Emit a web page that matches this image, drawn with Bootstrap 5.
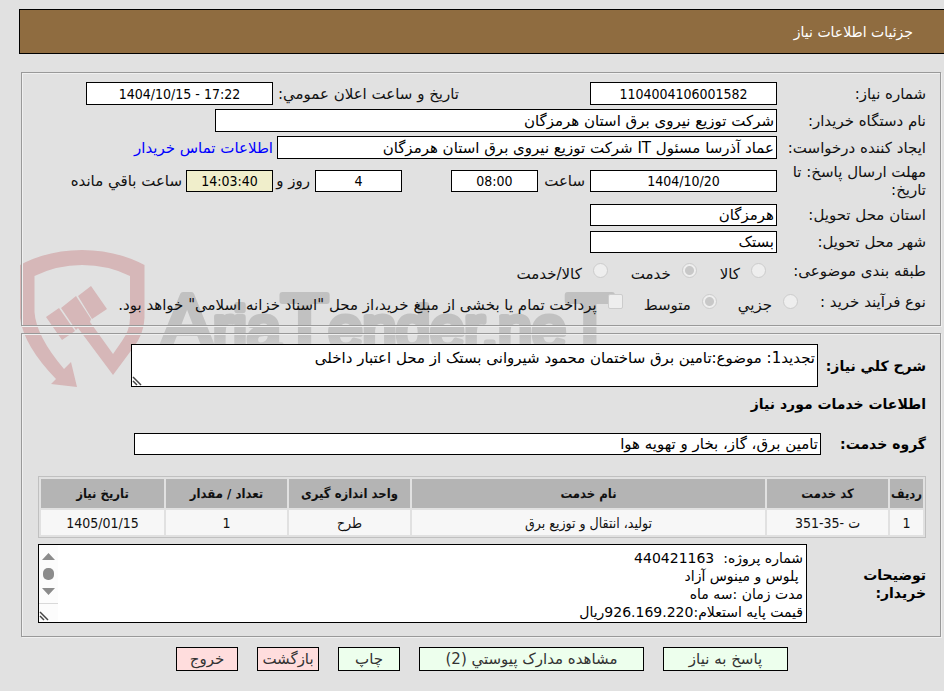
<!DOCTYPE html>
<html lang="fa" dir="rtl">
<head>
<meta charset="utf-8">
<meta name="viewport" content="width=device-width, initial-scale=1">
<title>جزئیات اطلاعات نیاز</title>
<link href="https://cdn.jsdelivr.net/npm/bootstrap@5.3.0/dist/css/bootstrap.min.css" rel="stylesheet">
<style>
body{background:#e1e1e1;color:#111;font-family:"DejaVu Sans",sans-serif;font-size:15px;line-height:18px}
.title-bar{background:#8f6c40;color:#fff;border:1px solid #000;border-right:0;margin:9px 0 18px 19px;padding:13px 31px 12px 0}
.title-bar h1{font-size:14px;line-height:18px;font-weight:400}
.panel{border:1px solid #999;box-shadow:inset 1px 1px #f0f0f0,1px 1px #f0f0f0;margin:0 3px 0 21px;padding:0 14px 0 16px}
.panel-info{padding-top:7px;padding-bottom:8px}
.panel-need{margin-top:7px;padding-top:10px;padding-bottom:13px}
.line{min-height:27px;white-space:nowrap}
.line-tall{min-height:40px}
.line-kind{min-height:31px;gap:23px}
.line-proc{min-height:31px;gap:21px}
.cap{width:149px;flex:none}
.cap-wrap{white-space:normal}
.cap-kind{width:137px;flex:none}
.cap-proc{width:107px;flex:none}
.box{background:#fff;border:1px solid #000;border-radius:0;padding:0 2px;height:23px;color:#000;min-width:0}
.box-low{height:22px}
.box-mid{width:187px}
.box-small{width:87px}
.box-num{text-align:center;font-family:"DejaVu Sans Condensed","DejaVu Sans",sans-serif;font-size:14px}
.box-org{width:562px}
.box-user{width:500px}
.box-left{background:#f0eecb}
.pub-cap{width:186px;margin-right:131px}
.gap-hour{margin-right:49px}
.hour-cap{width:52px;padding-right:5px}
.day-cap{width:42px;padding-right:5px}
.buyer-link{color:#00f;text-decoration:none}
.opt input{appearance:none;width:15px;height:15px;border:1px solid #ccc;background:#eee;border-radius:50%;flex:none}
.opt input[type=checkbox]{border-radius:2px}
.opt input:checked{background:radial-gradient(circle,#c8c8c8 0 4px,#eee 5px)}
.opt label{margin-right:11px;padding-top:7px}
.strong-cap{font-size:14px;font-weight:700;color:#000;flex:none}
.need-cap{width:108px}
.group-cap{width:105px}
.notes-cap{width:119px;padding-left:40px}
.panel-need h2{line-height:18px;margin:8px 0 20px}
.area{background:#fff;border:1px solid #000;border-radius:0;display:block;width:100%;resize:none;overflow:hidden;color:#000}
.need-area{height:43px;padding:4px 2px}
.notes-area{height:79px;padding:4px 3px 0 20px;font-size:14px}
.need-wrap{margin-left:93px}
.group-box{margin-left:96px}
.grip{left:1px;bottom:1px}
.bar{left:1px;top:1px}
.need-table{width:100%;border:1px solid #c0c0c0;border-collapse:separate;border-spacing:2px;font-family:"DejaVu Sans Condensed","DejaVu Sans",sans-serif;font-size:14px;text-align:center;margin:21px 0 6px;table-layout:fixed}
.need-table th{background:#b4b4b4;height:29px;padding:0;font-size:13px}
.need-table td{background:#f7f7f7;height:25px;padding:0}
.col-row{width:33px}
.col-std{width:121px}
.col-date{width:123px}
.actions{gap:19px;margin-top:10px;padding-right:156px}
.act{border:1px solid #000;background:#edffed;color:#333;padding:2px 0;width:62px;white-space:nowrap}
.act-no{background:#fdd}
.act-reply{width:125px}
.act-docs{width:225px}
.watermark{left:18px;top:245px;z-index:-1;direction:ltr}
.watermark text{font-family:"Liberation Sans",sans-serif}
</style>
</head>
<body>
<svg class="watermark position-absolute" width="610" height="145" viewBox="18 245 610 145" aria-hidden="true">
 <defs><linearGradient id="fade" gradientUnits="userSpaceOnUse" x1="0" y1="335" x2="0" y2="352"><stop offset="0" stop-color="#c1c1c1"/><stop offset="1" stop-color="#d2d2d2"/></linearGradient></defs>
 <path fill="#d6b7b8" d="M20 265Q48 250 82 250Q116 250 144.500 265V318Q144 334 133 348L113 375L78 328L76 330L61 308L76 296L91 319L90 322L113 354L122 341Q130 330 130 318V276Q108 265 82 265Q57 265 34.500 276V312Q36 336 64 369L71 362L77 387L51 384L56 379Q24 346 20 318ZM46 317L59 308L75 331L62 340ZM78 296L91 286L107 309L92 319Z"/>
 <text x="161" y="349" font-size="61" fill="url(#fade)" stroke="url(#fade)" stroke-width="6" stroke-linejoin="round"><tspan font-size="78">A</tspan>ria<tspan font-size="78">T</tspan>ender.ne<tspan font-size="78">T</tspan></text>
</svg>
<header class="title-bar"><h1 class="m-0">جزئیات اطلاعات نیاز</h1></header>
<main>
<section class="panel panel-info">
 <div class="line d-flex align-items-center"><label class="cap" for="num">شماره نیاز:</label><input class="box box-mid box-num" id="num" readonly value="1104004106001582"><label class="pub-cap" for="pub">تاریخ و ساعت اعلان عمومي:</label><input class="box box-mid box-num" id="pub" dir="ltr" readonly value="1404/10/15 - 17:22"></div>
 <div class="line d-flex align-items-center"><label class="cap" for="org">نام دستگاه خریدار:</label><input class="box box-org" id="org" readonly value="شرکت توزیع نیروی برق استان هرمزگان"></div>
 <div class="line d-flex align-items-center"><label class="cap" for="usr">ایجاد کننده درخواست:</label><input class="box box-user" id="usr" readonly value="عماد آذرسا مسئول IT شرکت توزیع نیروی برق استان هرمزگان"><a class="buyer-link me-1" href="#">اطلاعات تماس خریدار</a></div>
 <div class="line line-tall d-flex align-items-center"><label class="cap cap-wrap" for="due">مهلت ارسال پاسخ: تا تاریخ:</label><input class="box box-low box-mid box-num" id="due" readonly value="1404/10/20"><label class="hour-cap" for="hr">ساعت</label><input class="box box-low box-small box-num" id="hr" readonly value="08:00"><input class="box box-low box-small box-num gap-hour" id="dy" readonly value="4"><label class="day-cap" for="dy">روز و</label><input class="box box-low box-small box-num box-left" id="lf" readonly value="14:03:40"><label class="me-1" for="lf">ساعت باقي مانده</label></div>
 <div class="line d-flex align-items-center"><label class="cap" for="prv">استان محل تحویل:</label><input class="box box-low box-mid" id="prv" readonly value="هرمزگان"></div>
 <div class="line d-flex align-items-center"><label class="cap" for="cty">شهر محل تحویل:</label><input class="box box-low box-mid" id="cty" readonly value="بستک"></div>
 <div class="line line-kind d-flex align-items-center"><span class="cap-kind">طبقه بندی موضوعی:</span>
  <div class="opt d-flex align-items-center"><input type="radio" name="kind" id="k1" disabled><label for="k1">کالا</label></div>
  <div class="opt d-flex align-items-center"><input type="radio" name="kind" id="k2" disabled checked><label for="k2">خدمت</label></div>
  <div class="opt d-flex align-items-center"><input type="radio" name="kind" id="k3" disabled><label for="k3">کالا/خدمت</label></div></div>
 <div class="line line-proc d-flex align-items-center"><span class="cap-proc">نوع فرآیند خرید :</span>
  <div class="opt d-flex align-items-center"><input type="radio" name="proc" id="p1" disabled><label for="p1">جزیي</label></div>
  <div class="opt d-flex align-items-center"><input type="radio" name="proc" id="p2" disabled checked><label for="p2">متوسط</label></div>
  <div class="opt d-flex align-items-center"><input type="checkbox" id="p3" disabled><label for="p3">پرداخت تمام یا بخشی از مبلغ خرید،از محل "اسناد خزانه اسلامی" خواهد بود.</label></div></div>
</section>
<section class="panel panel-need">
 <div class="d-flex align-items-center"><label class="need-cap strong-cap" for="need">شرح کلي نیاز:</label>
  <div class="need-wrap position-relative flex-grow-1"><textarea class="area need-area" id="need" readonly>تجدید1: موضوع:تامین برق ساختمان محمود شیروانی بستک از محل اعتبار داخلی</textarea>
  <svg class="grip position-absolute" width="10" height="10" viewBox="0 0 10 10" stroke="#444" stroke-width="1.500" aria-hidden="true"><path d="M1 1L9 9M1 5L5 9"/></svg></div></div>
 <h2 class="strong-cap">اطلاعات خدمات مورد نیاز</h2>
 <div class="d-flex align-items-center"><label class="group-cap strong-cap" for="grp">گروه خدمت:</label><input class="box box-low group-box flex-grow-1" id="grp" readonly value="تامین برق، گاز، بخار و تهویه هوا"></div>
 <table class="need-table">
  <colgroup><col class="col-row"><col class="col-std"><col><col class="col-std"><col class="col-std"><col class="col-date"></colgroup>
  <thead><tr><th>ردیف</th><th>کد خدمت</th><th>نام خدمت</th><th>واحد اندازه گیری</th><th>تعداد / مقدار</th><th>تاریخ نیاز</th></tr></thead>
  <tbody><tr><td>1</td><td>ت -35-351</td><td>تولید، انتقال و توزیع برق</td><td>طرح</td><td>1</td><td>1405/01/15</td></tr></tbody>
 </table>
 <div class="d-flex align-items-center"><label class="notes-cap strong-cap" for="notes">توضیحات خریدار:</label>
  <div class="position-relative flex-grow-1"><textarea class="area notes-area" id="notes" readonly>شماره پروژه:  440421163
 پلوس و مینوس آزاد
مدت زمان :سه ماه
قیمت پایه استعلام:926.169.220ریال</textarea>
  <svg class="bar position-absolute" width="19" height="77" viewBox="0 0 19 77" aria-hidden="true"><path fill="#fcfcfc" d="M0 0h19v77H0z"/><path fill="#8b8b8b" d="M3 15h13L9.500 8ZM3 43h13L9.500 50Z"/><rect x="4" y="23" width="11" height="12" rx="5" fill="#8b8b8b"/><path fill="#d9d9d9" d="M0 58h19v1H0z"/><path d="M1 67L9 75M1 71L5 75" stroke="#444" stroke-width="1.500"/></svg></div></div>
</section>
<div class="actions d-flex">
 <button class="act act-reply" type="button">پاسخ به نیاز</button><button class="act act-docs" type="button">مشاهده مدارک پیوستي (2)</button><button class="act" type="button">چاپ</button><button class="act act-no" type="button">بازگشت</button><button class="act act-no" type="button">خروج</button>
</div>
</main>
</body>
</html>
